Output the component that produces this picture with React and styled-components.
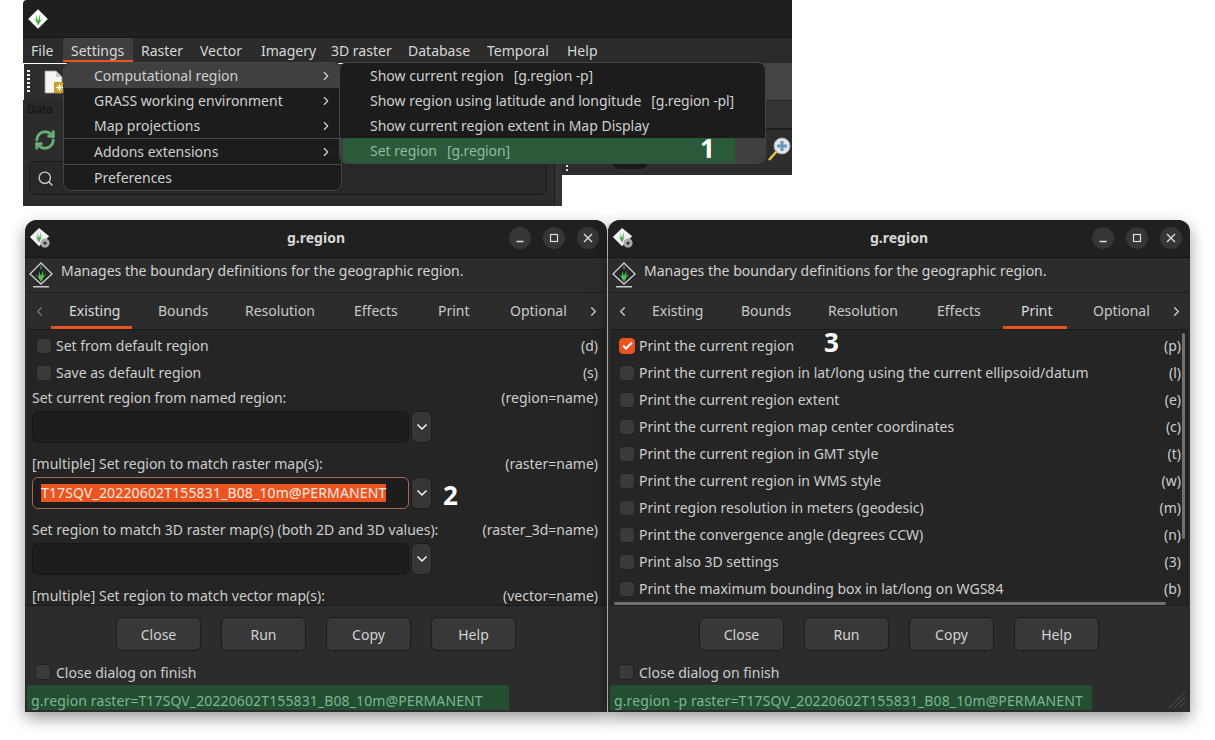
import React from "react";
import styled, { createGlobalStyle } from "styled-components";
import { ChevronLeft, ChevronRight, ChevronDown, RefreshCw, Search } from "lucide-react";

const Global = createGlobalStyle`
  html, body { margin: 0; padding: 0; background: #fff; }
  body { font-family: "Noto Sans", "Open Sans", sans-serif; font-size: 14px; color: #d6d6d6; overflow: hidden; }
  #root { width: 1215px; height: 740px; overflow: hidden; }
`;

const Page = styled.div`
  display: flex;
  flex-direction: column;
  gap: 14px;
  width: 1215px;
  height: 740px;
`;

/* ---------- main window crop ---------- */
const Shot = styled.div`
  position: relative;
  margin-left: 23px;
  width: 769px;
  height: 206px;
`;
const TopTitle = styled.div`
  height: 37px;
  background: #1f1f1f;
  border-bottom: 1px solid #141414;
  border-top-left-radius: 4px;
  display: flex;
  align-items: center;
  padding-left: 4px;
`;
const MenuBar = styled.div`
  height: 25px;
  background: #2b2b2b;
  display: flex;
  align-items: flex-start;
`;
const MenuItem = styled.div`
  width: ${(p) => p.$w}px;
  height: 24px;
  box-sizing: border-box;
  padding-left: 8px;
  line-height: 25px;
  white-space: nowrap;
  color: #d8d8d8;
  background: ${(p) => (p.$active ? "#3f3f3f" : "transparent")};
  border-bottom: ${(p) => (p.$active ? "2px solid #e95420" : "none")};
`;
const Below = styled.div`
  display: flex;
  align-items: flex-start;
`;
const LeftPane = styled.div`
  width: 539px;
  height: 143px;
  background: #2c2c2c;
  display: flex;
`;
const LeftMain = styled.div`
  flex: 1;
  display: flex;
  flex-direction: column;
  border-top: 1px solid #fff;
`;
const ToolRow = styled.div`
  height: 36px;
  display: flex;
  align-items: center;
  gap: 14px;
  padding-left: 3px;
  background: #2e2e2e;
  border-left: 1px solid #fff;
`;
const Dots = styled.div`
  width: 3px;
  height: 24px;
  background: repeating-linear-gradient(to bottom, #f0f0f0 0 2px, transparent 2px 4px);
`;
const DataStrip = styled.div`
  height: 18px;
  width: 42px;
  background: #2a2a2a;
  color: #111;
  font-size: 11.5px;
  line-height: 18px;
  padding-left: 4px;
  box-sizing: border-box;
`;
const RefreshRow = styled.div`
  height: 43px;
  display: flex;
  align-items: center;
  padding-left: 11px;
  color: #66ad78;
`;
const SearchBox = styled.div`
  margin: 0 7px 0 6px;
  height: 34px;
  box-sizing: border-box;
  border: 1px solid #1a1a1a;
  border-radius: 6px;
  background: #282828;
  display: flex;
  align-items: center;
  padding-left: 7px;
  color: #c8c8c8;
`;
const LeftRail = styled.div`
  width: 7px;
  background: #333;
  border-left: 1px solid #1c1c1c;
`;
const RightPane = styled.div`
  width: 230px;
  height: 112px;
  background: #2d2d2d;
  display: flex;
  flex-direction: column;
  position: relative;
`;
const RightTool = styled.div`
  height: 37px;
  background: #444;
`;
const RightBand = styled.div`
  height: 27px;
  background: #333;
  border-top: 1px solid #262626;
  border-bottom: 2px solid #1f1f1f;
`;
const RightFoot = styled.div`
  flex: 1;
  display: flex;
  justify-content: flex-end;
  align-items: flex-start;
  padding: 6px 0 0 0;
`;
const DarkBump = styled.div`
  position: absolute;
  left: 50px;
  bottom: 6px;
  width: 36px;
  height: 12px;
  border-radius: 0 0 8px 8px;
  background: #191919;
`;
const Grip = styled.div`
  position: absolute;
  left: 4px;
  bottom: 2px;
  width: 2px;
  height: 8px;
  background: repeating-linear-gradient(to bottom, #ddd 0 2px, transparent 2px 4px);
`;

const PopMenu = styled.div`
  position: absolute;
  top: ${(p) => p.$top}px;
  left: ${(p) => p.$left}px;
  width: ${(p) => p.$w}px;
  box-sizing: border-box;
  background: #1c1c1c;
  border: 1px solid #444;
  border-radius: 8px;
  overflow: hidden;
  z-index: ${(p) => p.$z};
`;
const PopRow = styled.div`
  height: 25px;
  display: flex;
  align-items: center;
  justify-content: space-between;
  box-sizing: border-box;
  padding: 0 8px 0 30px;
  white-space: nowrap;
  color: #cfcfcf;
  background: ${(p) => (p.$hl ? "#404040" : "transparent")};
  margin-top: ${(p) => (p.$sep ? "1px" : "0")};
  box-shadow: ${(p) => (p.$sep ? "0 -1px 0 #4a4a4a" : "none")};
`;
const Shortcut = styled.span`
  margin-left: 10px;
  letter-spacing: -0.15px;
`;
const SetRow = styled.div`
  height: 25px;
  background: #404040;
  padding-left: 3px;
  display: flex;
`;
const SetFill = styled.div`
  width: 392px;
  background: #2b5a3b;
  border-radius: 3px 0 0 0;
  color: #8fb9a0;
  padding-left: 27px;
  box-sizing: border-box;
  line-height: 25px;
  white-space: nowrap;
`;
const Callout = styled.div`
  position: absolute;
  left: ${(p) => p.$x}px;
  top: ${(p) => p.$y}px;
  color: #fff;
  font-weight: 700;
  font-size: 26px;
  line-height: 22px;
  z-index: 9;
`;

/* ---------- dialogs ---------- */
const Dialogs = styled.div`
  display: flex;
  gap: 1px;
  margin-left: 25px;
`;
const Dialog = styled.div`
  position: relative;
  width: 582px;
  height: 492px;
  background: #2c2c2c;
  border-radius: 12px 12px 0 0;
  box-shadow: 0 6px 16px rgba(0, 0, 0, 0.4);
  display: flex;
  flex-direction: column;
  overflow: hidden;
`;
const TitleBar = styled.div`
  height: 37px;
  flex: none;
  background: #202020;
  border-bottom: 1px solid #141414;
  display: flex;
  align-items: center;
  justify-content: center;
  position: relative;
`;
const TitleIcon = styled.div`
  position: absolute;
  left: 4px;
  top: 7px;
  display: flex;
`;
const TitleText = styled.div`
  font-weight: 700;
  font-size: 14px;
  color: #d8d8d8;
  margin-bottom: 2px;
`;
const WinButtons = styled.div`
  position: absolute;
  right: 8px;
  top: 7px;
  display: flex;
  gap: 12px;
`;
const WinBtn = styled.div`
  width: 22px;
  height: 22px;
  border-radius: 50%;
  background: #363636;
  display: flex;
  align-items: center;
  justify-content: center;
`;
const InfoRow = styled.div`
  height: 34px;
  flex: none;
  display: flex;
  align-items: center;
  gap: 7px;
  padding-left: 3px;
  color: #d2d2d2;
`;
const InfoText = styled.span`
  padding-bottom: 10px;
`;
const Notebook = styled.div`
  height: 314px;
  flex: none;
  margin: 0 2px 0 2px;
  border-top: 1px solid #1c1c1c;
  box-sizing: border-box;
  display: flex;
  flex-direction: column;
`;
const TabBar = styled.div`
  height: 37px;
  flex: none;
  display: flex;
  align-items: stretch;
  background: #2c2c2c;
  border-bottom: 1px solid #1c1c1c;
  box-sizing: border-box;
  position: relative;
`;
const TabArrow = styled.div`
  width: 24px;
  flex: none;
  display: flex;
  align-items: center;
  justify-content: center;
  color: ${(p) => (p.$dim ? "#777" : "#cfcfcf")};
`;
const Tab = styled.div`
  width: ${(p) => p.$w}px;
  margin-right: 8px;
  box-sizing: border-box;
  padding-left: 18px;
  line-height: 35px;
  color: ${(p) => (p.$active ? "#d8dde0" : "#c8c8c8")};
  white-space: nowrap;
  border-bottom: 3px solid ${(p) => (p.$active ? "#e95420" : "transparent")};
`;
const TabSpacer = styled.div`
  flex: 1;
`;
const Panel = styled.div`
  flex: 1;
  background: #252525;
  border-right: 1px solid #1c1c1c;
  border-bottom: 1px solid #1c1c1c;
  padding-top: 2px;
  position: relative;
  overflow: hidden;
`;
const Row = styled.div`
  height: ${(p) => (p.$check ? 27 : 20)}px;
  margin-top: ${(p) => (p.$label ? p.$label : 0)}px;
  display: flex;
  align-items: center;
  justify-content: space-between;
  padding: 0 6px 0 ${(p) => (p.$check ? 9 : 5)}px;
  white-space: nowrap;
  color: #cdcdcd;
`;
const CheckLabel = styled.div`
  display: flex;
  align-items: center;
  gap: 4px;
`;
const Box = styled.div`
  width: 16px;
  height: 16px;
  flex: none;
  box-sizing: border-box;
  border-radius: 4px;
  background: ${(p) => (p.$on ? "#e95420" : "#3a3a3a")};
  border: 1px solid ${(p) => (p.$on ? "#e95420" : "#222")};
  display: flex;
  align-items: center;
  justify-content: center;
`;
const ComboRow = styled.div`
  display: flex;
  gap: 2px;
  margin: 4px 0 10px 5px;
`;
const ComboInput = styled.div`
  width: 377px;
  height: 32px;
  box-sizing: border-box;
  background: #1d1d1d;
  border: ${(p) => (p.$focus ? "1.5px solid #a9694f" : "1px solid #171717")};
  border-radius: 6px;
  display: flex;
  align-items: center;
  padding-left: 8px;
`;
const Selected = styled.span`
  background: #e95420;
  color: #fde9e2;
  font-size: 14px;
  line-height: 18px;
  letter-spacing: 0.15px;
  white-space: nowrap;
`;
const ComboBtn = styled.div`
  width: 21px;
  height: 32px;
  box-sizing: border-box;
  background: #363636;
  border: 1px solid #1c1c1c;
  border-radius: 6px;
  display: flex;
  align-items: center;
  justify-content: center;
  color: #e8e8e8;
`;
const VScroll = styled.div`
  position: absolute;
  right: 2px;
  top: 3px;
  width: 3px;
  height: 206px;
  border-radius: 2px;
  background: #707070;
`;
const HScroll = styled.div`
  position: absolute;
  left: 4px;
  bottom: 0;
  width: 552px;
  height: 3px;
  border-radius: 2px;
  background: #707070;
`;
const Buttons = styled.div`
  display: flex;
  justify-content: center;
  gap: 20px;
  padding-top: 11px;
`;
const Btn = styled.div`
  width: 85px;
  height: 34px;
  box-sizing: border-box;
  background: #383838;
  border: 1px solid #1c1c1c;
  border-radius: 6px;
  display: flex;
  align-items: center;
  justify-content: center;
  color: #d2d2d2;
`;
const CloseRow = styled.div`
  display: flex;
  align-items: center;
  gap: 5px;
  height: 16px;
  margin: 13px 0 0 10px;
  color: #cdcdcd;
`;
const Status = styled.div`
  width: 482px;
  height: 25px;
  margin: 5px 0 0 2px;
  box-sizing: border-box;
  background: #234e31;
  border-radius: 2px 2px 0 0;
  color: #7fb596;
  padding: 6px 0 0 4px;
  line-height: 19px;
  white-space: nowrap;
  letter-spacing: 0.12px;
`;
const ResizeGrip = styled.svg`
  position: absolute;
  right: 4px;
  bottom: 3px;
`;

const GrassLogo = ({ size = 22 }) => (
  <svg width={size} height={size} viewBox="0 0 24 24">
    <path d="M12 1 23 12 12 23 1 12Z" fill="#fff" stroke="#222" strokeWidth="0.5" />
    <path d="M12 19c-1-3-3-6-5-9l3 3-.5-6 2.5 7 2.5-8-.3 8 3.5-4c-2 3-4 6-5.700 9Z" fill="#4cae4f" />
  </svg>
);
const DialogIcon = () => (
  <svg width="22" height="22" viewBox="0 0 24 24">
    <path d="M11 1 22 10 11 21 1 11Z" fill="#f2f2f2" />
    <path d="M11 17c-1-2-2.500-5-4-7l2.500 2L9 6l2 6 2-7-.3 7 3-3c-2 2-3.500 5-4.700 8Z" fill="#4cae4f" />
    <circle cx="17.500" cy="17.500" r="5" fill="#a9a9a9" />
    <circle cx="17.500" cy="17.500" r="1.800" fill="#333" />
  </svg>
);
const ModuleIcon = () => (
  <svg width="26" height="27" viewBox="0 0 26 27">
    <path d="M13 1 24 12 13 22 2 12Z" fill="#252525" stroke="#cfcfcf" strokeWidth="1.300" />
    <path d="M13 20c-1-2-3-5-5-8l3 2.500L11 9l2 5 2.500-6-.5 6 3-2.500c-1.500 2.500-3.500 5.500-5 8.500Z" fill="#4fbf4f" />
    <path d="M12.500 3.500h1v4h-1z" fill="#4fbf4f" />
    <rect x="5" y="24" width="16" height="1.500" fill="#c8c8c8" />
  </svg>
);
const DocIcon = () => (
  <svg width="22" height="24" viewBox="0 0 22 24">
    <path d="M1 1h11l6 6v16H1Z" fill="#f5f5f5" stroke="#999" strokeWidth="0.8" />
    <path d="M12 1v6h6" fill="#ccc" />
    <rect x="10" y="12" width="11" height="11" fill="#c9a21c" />
    <path d="M15.500 13.500v8M12 17.500h7M13 15l5 5M18 15l-5 5" stroke="#fff" strokeWidth="1" />
  </svg>
);
const ZoomIcon = () => (
  <svg width="24" height="26" viewBox="0 0 24 26">
    <path d="M1 24 9 15" stroke="#e6c94a" strokeWidth="2.500" />
    <circle cx="14" cy="10" r="8" fill="#dfe5ea" stroke="#9aa" />
    <path d="M14 5v10M9 10h10" stroke="#6d96ba" strokeWidth="3" />
  </svg>
);
const CheckMark = () => (
  <svg width="11" height="9" viewBox="0 0 11 9">
    <path d="M1 4.500 4 7.500 10 1.500" fill="none" stroke="#fff" strokeWidth="2" />
  </svg>
);
const WinIcons = () => (
  <WinButtons>
    <WinBtn>
      <svg width="10" height="10" viewBox="0 0 10 10"><path d="M1.500 8.500h7" stroke="#ddd" strokeWidth="1.300" /></svg>
    </WinBtn>
    <WinBtn>
      <svg width="10" height="10" viewBox="0 0 10 10"><rect x="1.500" y="1.500" width="7" height="7" fill="none" stroke="#ddd" strokeWidth="1.200" /></svg>
    </WinBtn>
    <WinBtn>
      <svg width="10" height="10" viewBox="0 0 10 10"><path d="M1 1l8 8M9 1l-8 8" stroke="#ddd" strokeWidth="1.300" /></svg>
    </WinBtn>
  </WinButtons>
);

const menuItems = [
  ["File", 40], ["Settings", 70], ["Raster", 59], ["Vector", 61], ["Imagery", 70],
  ["3D raster", 77], ["Database", 79], ["Temporal", 80], ["Help", 60],
];
const settings = [
  ["Computational region", true, true],
  ["GRASS working environment", true],
  ["Map projections", true],
  ["Addons extensions", true, false, true],
  ["Preferences", false, false, true],
];
const regionMenu = [
  ["Show current region", "[g.region -p]"],
  ["Show region using latitude and longitude", "[g.region -pl]"],
  ["Show current region extent in Map Display", ""],
];
const tabs = [["Existing", 81], ["Bounds", 79], ["Resolution", 101], ["Effects", 76], ["Print", 64], ["Optional", 80]];
const printRows = [
  ["Print the current region", "(p)", true],
  ["Print the current region in lat/long using the current ellipsoid/datum", "(l)"],
  ["Print the current region extent", "(e)"],
  ["Print the current region map center coordinates", "(c)"],
  ["Print the current region in GMT style", "(t)"],
  ["Print the current region in WMS style", "(w)"],
  ["Print region resolution in meters (geodesic)", "(m)"],
  ["Print the convergence angle (degrees CCW)", "(n)"],
  ["Print also 3D settings", "(3)"],
  ["Print the maximum bounding box in lat/long on WGS84", "(b)"],
];
const combos = [
  ["Set current region from named region:", "(region=name)", ""],
  ["[multiple] Set region to match raster map(s):", "(raster=name)", "T17SQV_20220602T155831_B08_10m@PERMANENT"],
  ["Set region to match 3D raster map(s) (both 2D and 3D values):", "(raster_3d=name)", ""],
];

function DialogWindow({ active, command, grip, overlay, children }) {
  return (
    <Dialog>
      <TitleBar>
        <TitleIcon><DialogIcon /></TitleIcon>
        <TitleText>g.region</TitleText>
        <WinIcons />
      </TitleBar>
      <InfoRow>
        <ModuleIcon />
        <InfoText>Manages the boundary definitions for the geographic region.</InfoText>
      </InfoRow>
      <Notebook>
        <TabBar>
          <TabArrow $dim={active === "Existing"}><ChevronLeft size={15} /></TabArrow>
          {tabs.map(([t, w]) => (
            <Tab key={t} $w={w} $active={t === active}>{t}</Tab>
          ))}
          <TabSpacer />
          <TabArrow><ChevronRight size={15} /></TabArrow>
        </TabBar>
        <Panel>{children}</Panel>
      </Notebook>
      <Buttons>
        {["Close", "Run", "Copy", "Help"].map((b) => <Btn key={b}>{b}</Btn>)}
      </Buttons>
      <CloseRow><Box />Close dialog on finish</CloseRow>
      <Status>{command}</Status>
      {overlay}
      {grip && (
        <ResizeGrip width="18" height="18" viewBox="0 0 18 18">
          <path d="M1 17 17 1M6 17 17 6M11 17 17 11" stroke="#555" strokeWidth="1" />
        </ResizeGrip>
      )}
    </Dialog>
  );
}

export default function App() {
  return (
    <Page>
      <Global />
      <Shot>
        <TopTitle><GrassLogo /></TopTitle>
        <MenuBar>
          {menuItems.map(([m, w]) => (
            <MenuItem key={m} $w={w} $active={m === "Settings"}>{m}</MenuItem>
          ))}
        </MenuBar>
        <Below>
          <LeftPane>
            <LeftMain>
              <ToolRow><Dots /><DocIcon /></ToolRow>
              <DataStrip>Data</DataStrip>
              <RefreshRow><RefreshCw size={22} strokeWidth={3.2} /></RefreshRow>
              <SearchBox><Search size={17} /></SearchBox>
            </LeftMain>
            <LeftRail />
          </LeftPane>
          <RightPane>
            <RightTool />
            <RightBand />
            <RightFoot><ZoomIcon /></RightFoot>
            <DarkBump />
            <Grip />
          </RightPane>
        </Below>
        <PopMenu $top={62} $left={40} $w={279} $z={3}>
          {settings.map(([t, arrow, hl, sep]) => (
            <PopRow key={t} $hl={hl} $sep={sep}>
              {t}
              {arrow && <ChevronRight size={14} />}
            </PopRow>
          ))}
        </PopMenu>
        <PopMenu $top={62} $left={316} $w={427} $z={4}>
          {regionMenu.map(([t, s]) => (
            <PopRow key={t}><span>{t}{s && <Shortcut>{s}</Shortcut>}</span></PopRow>
          ))}
          <SetRow><SetFill>Set region<Shortcut>[g.region]</Shortcut></SetFill></SetRow>
        </PopMenu>
        <Callout $x={677} $y={137}>1</Callout>
      </Shot>
      <Dialogs>
        <DialogWindow
          active="Existing"
          command="g.region raster=T17SQV_20220602T155831_B08_10m@PERMANENT"
          overlay={<Callout $x={418} $y={264}>2</Callout>}
        >
          <Row $check><CheckLabel><Box />Set from default region</CheckLabel>(d)</Row>
          <Row $check><CheckLabel><Box />Save as default region</CheckLabel>(s)</Row>
          {combos.map(([l, k, v], i) => (
            <React.Fragment key={k}>
              <Row $label={i === 0 ? 1 : 0}>{l}<span>{k}</span></Row>
              <ComboRow>
                <ComboInput $focus={!!v}>{v && <Selected>{v}</Selected>}</ComboInput>
                <ComboBtn><ChevronDown size={16} strokeWidth={2.6} /></ComboBtn>
              </ComboRow>
            </React.Fragment>
          ))}
          <Row>[multiple] Set region to match vector map(s):<span>(vector=name)</span></Row>
        </DialogWindow>
        <DialogWindow
          active="Print"
          grip
          command="g.region -p raster=T17SQV_20220602T155831_B08_10m@PERMANENT"
          overlay={<Callout $x={216} $y={111}>3</Callout>}
        >
          {printRows.map(([t, k, on]) => (
            <Row key={k} $check>
              <CheckLabel><Box $on={on}>{on && <CheckMark />}</Box>{t}</CheckLabel>
              {k}
            </Row>
          ))}
          <VScroll />
          <HScroll />
        </DialogWindow>
      </Dialogs>
    </Page>
  );
}
